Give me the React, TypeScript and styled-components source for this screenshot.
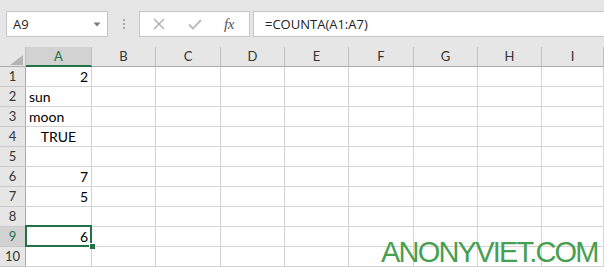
import React from "react";
import styled, { createGlobalStyle } from "styled-components";

const GlobalStyle = createGlobalStyle`
  html, body { margin: 0; padding: 0; background: #ffffff; }
  * { box-sizing: border-box; }
`;

const GREEN = "#217346";

const Page = styled.div`
  position: relative;
  width: 604px;
  height: 267px;
  overflow: hidden;
  background: #ffffff;
  font-family: "Open Sans", "Noto Sans", sans-serif;
`;

const TopBar = styled.div`
  height: 47px;
  background: #e6e6e6;
  display: flex;
  align-items: flex-start;
  padding: 11px 0 0 6px;
`;

const Box = styled.div`
  height: 26px;
  background: #ffffff;
  border: 1px solid #c6c6c6;
  display: flex;
  align-items: center;
`;

const NameBox = styled(Box)`
  width: 102px;
  padding: 0 6px 0 6px;
  justify-content: space-between;
  font-size: 13px;
  color: #222;
`;

const Grip = styled.div`
  width: 31px;
  height: 26px;
  display: flex;
  flex-direction: column;
  align-items: center;
  padding-top: 8px;
  gap: 2px;
`;

const GripDot = styled.span`
  width: 2px;
  height: 2px;
  background: #a8a8a8;
`;

const FuncBox = styled(Box)`
  width: 111px;
  padding-left: 13px;
  gap: 0;
`;

const IconSlot = styled.span<{ $w: number }>`
  width: ${(p) => p.$w}px;
  height: 24px;
  display: flex;
  align-items: center;
`;

const Fx = styled.span`
  font-family: "Liberation Serif", "DejaVu Serif", serif;
  font-style: italic;
  font-size: 15px;
  color: #555;
  letter-spacing: -0.5px;
`;

const FormulaInput = styled(Box)`
  flex: 1;
  margin-left: 3px;
  margin-right: -2px;
  padding-left: 11px;
  font-size: 13px;
  color: #222;
`;

const Sheet = styled.div`
  display: grid;
  grid-template-columns: 26px 66px 64px 65px 64px 64px 65px 64px 64px 1fr;
  grid-auto-rows: 20px;
  font-family: "Lato", "Open Sans", sans-serif;
`;

const Corner = styled.div`
  background: #e6e6e6;
  border-right: 1px solid #c0c0c0;
  border-bottom: 1px solid #ababab;
  display: flex;
  align-items: flex-end;
  justify-content: flex-end;
  padding: 0 2px 1px 0;
`;

const ColHeader = styled.div<{ $active?: boolean }>`
  background: ${(p) => (p.$active ? "#d2d2d2" : "#e6e6e6")};
  color: ${(p) => (p.$active ? GREEN : "#333")};
  border-right: 1px solid #c0c0c0;
  border-bottom: ${(p) => (p.$active ? `2px solid ${GREEN}` : "1px solid #ababab")};
  font-size: 13px;
  line-height: 19px;
  text-align: center;
`;

const RowHeader = styled.div<{ $active?: boolean }>`
  background: ${(p) => (p.$active ? "#d2d2d2" : "#e6e6e6")};
  color: ${(p) => (p.$active ? GREEN : "#333")};
  border-right: 1px solid #ababab;
  border-bottom: 1px solid #c8c8c8;
  font-size: 13px;
  line-height: 19px;
  text-align: center;
`;

const Cell = styled.div<{ $align?: "left" | "right" | "center" }>`
  position: relative;
  border-right: 1px solid #d4d4d4;
  border-bottom: 1px solid #d4d4d4;
  font-size: 14px;
  line-height: 19px;
  color: #000;
  padding: 0 3px;
  text-align: ${(p) => p.$align || "left"};
  white-space: nowrap;
`;

const Selection = styled.div`
  position: absolute;
  z-index: 2;
  left: -1px;
  top: -2px;
  width: 67px;
  height: 22px;
  border: 2px solid ${GREEN};
  pointer-events: none;
`;

const FillHandle = styled.div`
  position: absolute;
  left: 62px;
  top: 16px;
  width: 7px;
  height: 7px;
  background: ${GREEN};
  border: 1px solid #ffffff;
`;

const Watermark = styled.div`
  position: absolute;
  z-index: 3;
  left: 381px;
  top: 238px;
  font-family: "Liberation Sans", "DejaVu Sans", sans-serif;
  font-size: 29px;
  line-height: 29px;
  letter-spacing: -1.8px;
  color: #46a050;
  white-space: nowrap;
`;

const columns = ["A", "B", "C", "D", "E", "F", "G", "H", "I"];

type Entry = { v: string; a: "left" | "right" | "center" } | null;
const colA: Entry[] = [
  { v: "2", a: "right" },
  { v: "sun", a: "left" },
  { v: "moon", a: "left" },
  { v: "TRUE", a: "center" },
  null,
  { v: "7", a: "right" },
  { v: "5", a: "right" },
  null,
  { v: "6", a: "right" },
  null,
];

export default function App() {
  return (
    <Page>
      <GlobalStyle />
      <TopBar>
        <NameBox>
          <span>A9</span>
          <svg width="8" height="5" viewBox="0 0 8 5">
            <path d="M0.5 0.5 L7.5 0.5 L4 4.5 Z" fill="#7a7a7a" />
          </svg>
        </NameBox>
        <Grip>
          <GripDot />
          <GripDot />
          <GripDot />
        </Grip>
        <FuncBox>
          <IconSlot $w={35}>
            <svg width="12" height="12" viewBox="0 0 12 12">
              <path d="M1 1 L11 11 M11 1 L1 11" stroke="#a8a8a8" strokeWidth="1.2" fill="none" />
            </svg>
          </IconSlot>
          <IconSlot $w={36}>
            <svg width="14" height="11" viewBox="0 0 14 11">
              <path d="M1 5.5 L5 9.5 L13 1" stroke="#bdbdbd" strokeWidth="2" fill="none" />
            </svg>
          </IconSlot>
          <IconSlot $w={20}>
            <Fx>fx</Fx>
          </IconSlot>
        </FuncBox>
        <FormulaInput>=COUNTA(A1:A7)</FormulaInput>
      </TopBar>
      <Sheet>
        <Corner>
          <svg width="13" height="10" viewBox="0 0 13 10">
            <path d="M13 0 L13 10 L0 10 Z" fill="#b4b4b4" />
          </svg>
        </Corner>
        {columns.map((c) => (
          <ColHeader key={c} $active={c === "A"}>
            {c}
          </ColHeader>
        ))}
        {colA.map((entry, i) => (
          <React.Fragment key={i}>
            <RowHeader $active={i === 8}>{i + 1}</RowHeader>
            <Cell $align={entry?.a}>
              {entry?.v}
              {i === 8 && (
                <Selection>
                  <FillHandle />
                </Selection>
              )}
            </Cell>
            {columns.slice(1).map((c) => (
              <Cell key={c} />
            ))}
          </React.Fragment>
        ))}
      </Sheet>
      <Watermark>ANONYVIET.COM</Watermark>
    </Page>
  );
}
